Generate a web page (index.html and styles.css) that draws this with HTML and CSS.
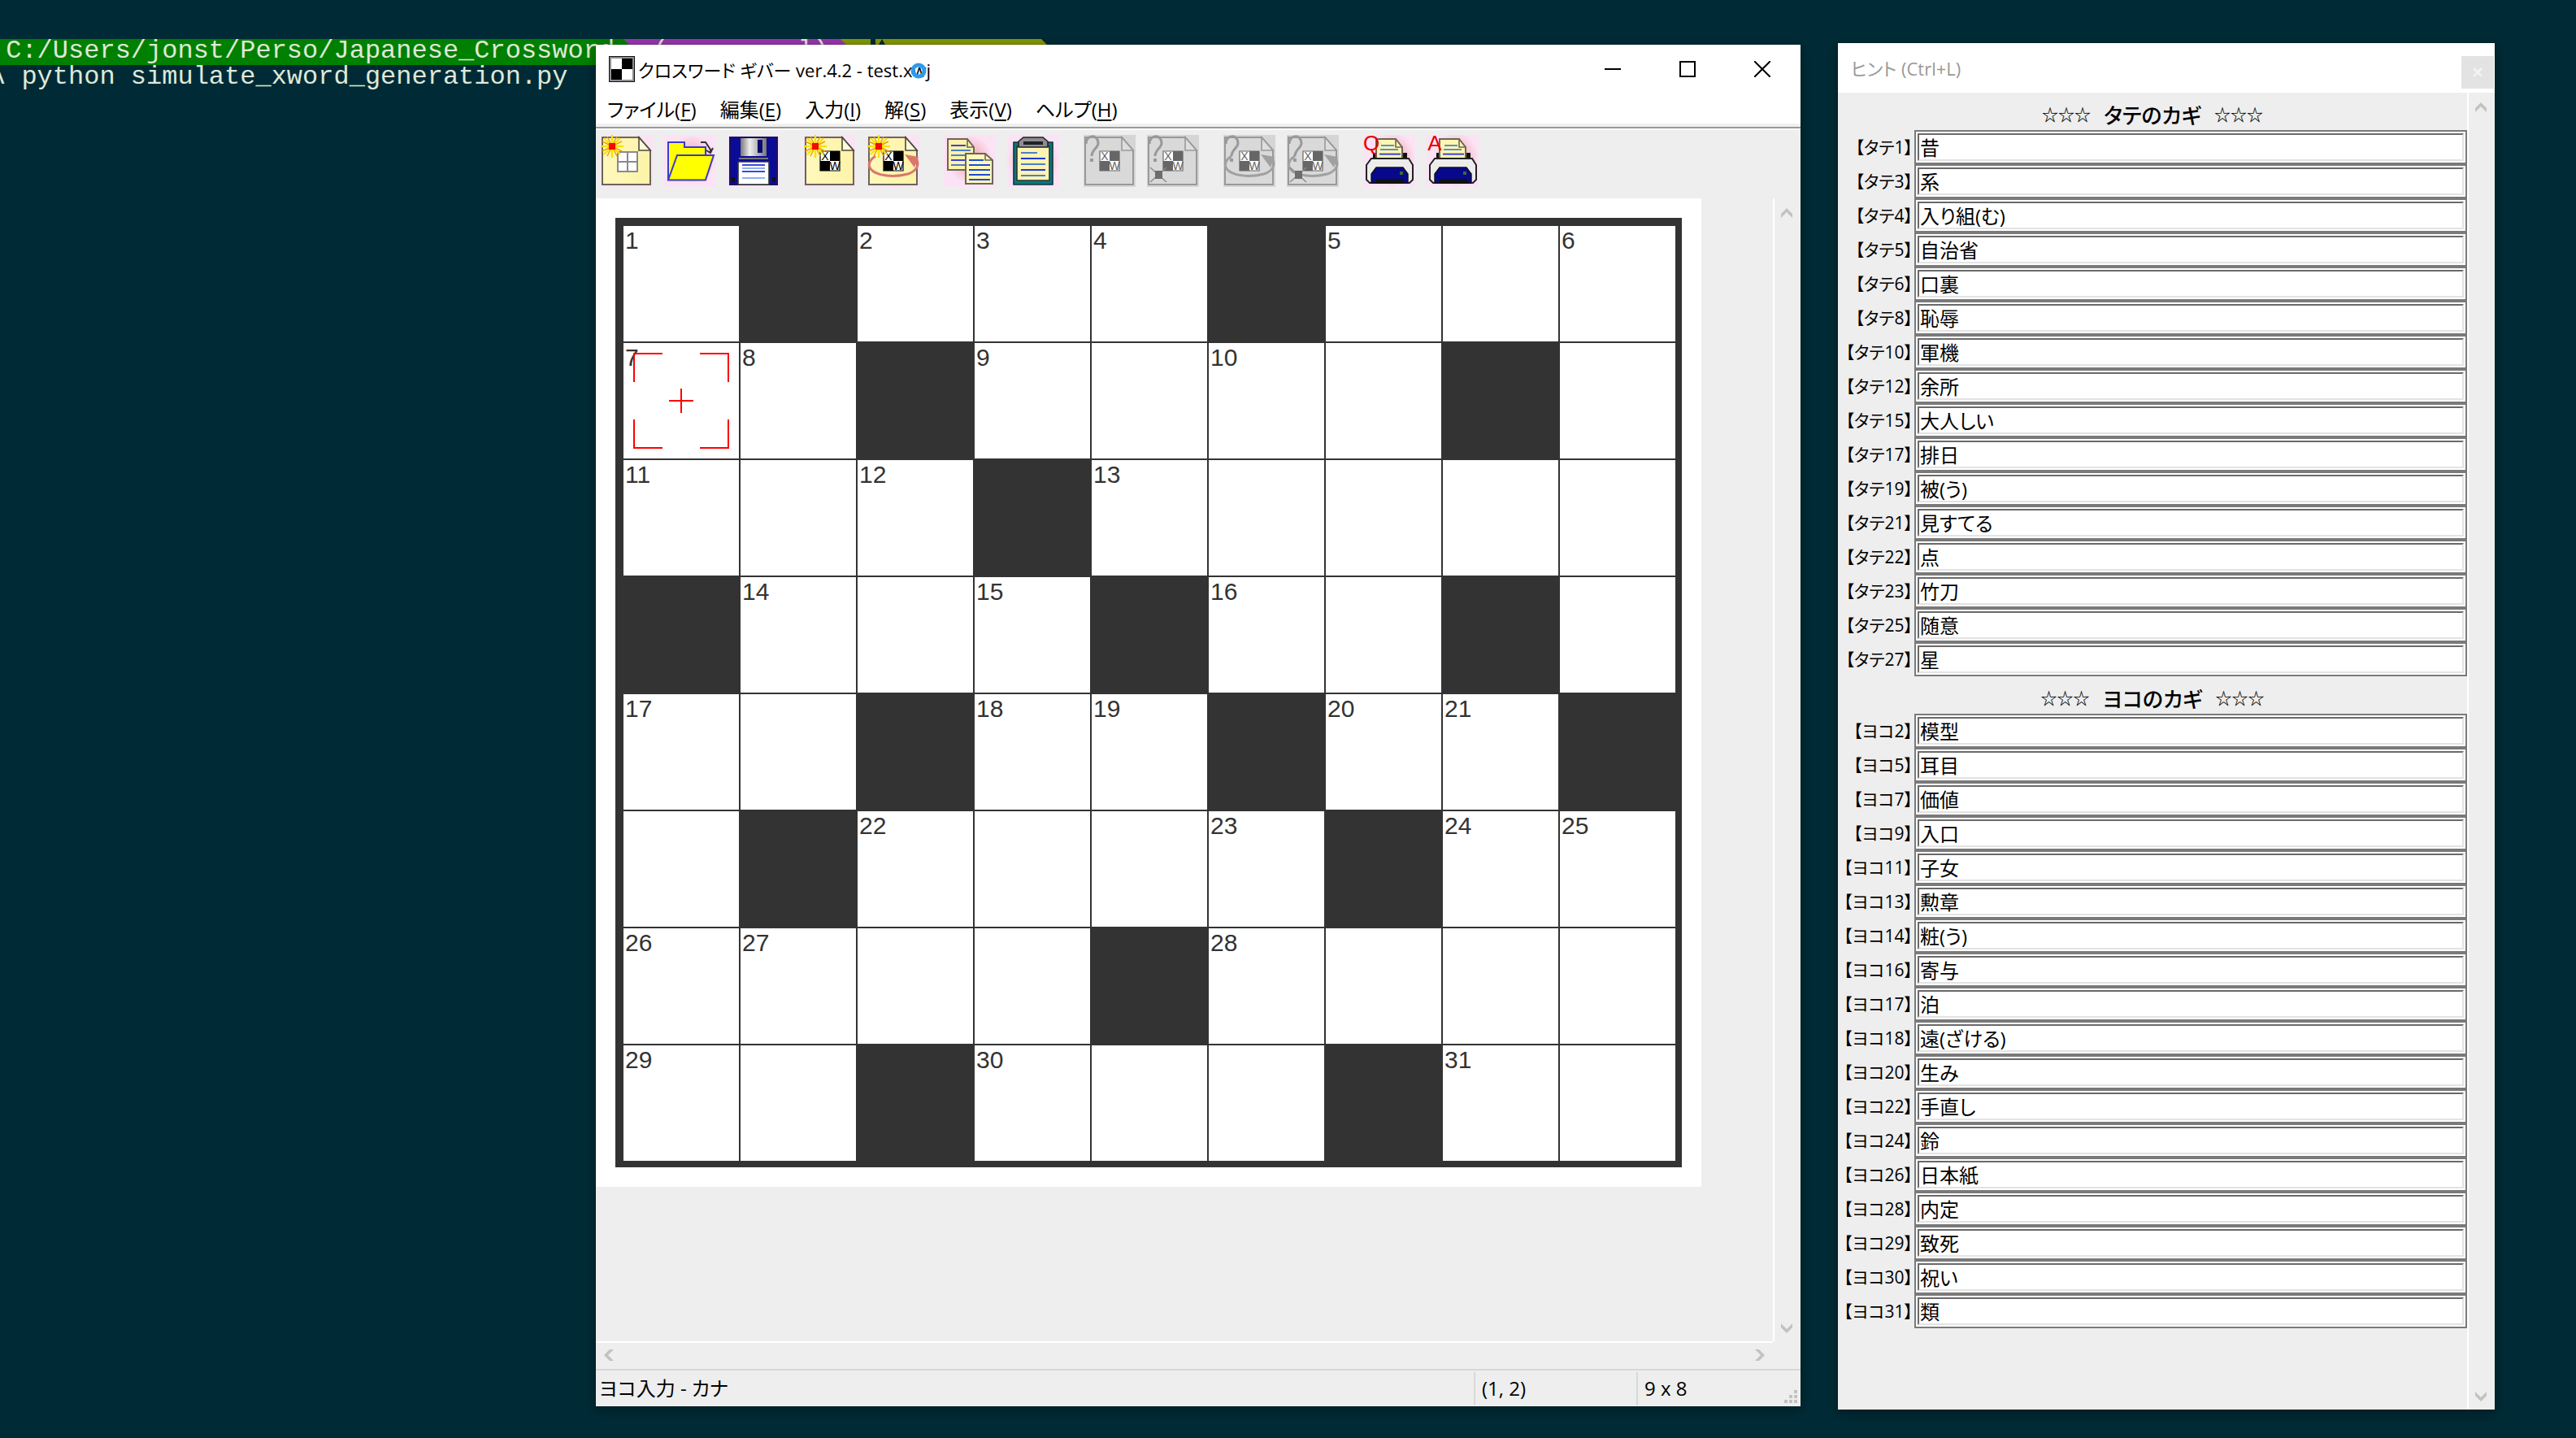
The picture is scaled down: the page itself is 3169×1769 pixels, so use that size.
FILE: index.html
```html
<!DOCTYPE html>
<html lang="ja">
<head>
<meta charset="utf-8">
<title>クロスワード ギバー ver.4.2 - test.xwj</title>
<link rel="stylesheet" href="styles.css">
</head>
<body>
<svg class="defs" aria-hidden="true">
  <defs>
    <radialGradient id="glow"><stop offset="0" stop-color="#e88a94"/><stop offset=".55" stop-color="#f6c3d0"/><stop offset="1" stop-color="#fbe3f5"/></radialGradient>
    <linearGradient id="steel"><stop offset="0" stop-color="#777"/><stop offset=".35" stop-color="#eee"/><stop offset="1" stop-color="#777"/></linearGradient>
    <linearGradient id="cream"><stop offset="0" stop-color="#fff8bc"/><stop offset="1" stop-color="#fdf3a8"/></linearGradient>
    <symbol id="page" viewBox="0 0 32 32"><path fill="#fbe3f5" d="M0 0h32v32H0z"/><path fill="url(#cream)" stroke="#6a6658" d="M1 1.5h22.5l7 8v21H1z"/><path fill="#fffbd8" stroke="#4d4a40" stroke-width=".8" d="M23.5 1.5v8h7z"/></symbol>
    <symbol id="gray-page" viewBox="0 0 32 32"><path fill="#d5d5d5" d="M0 0h32v32H0z"/><path fill="#d9d9d9" stroke="#999" d="M1 1.5h22.5l7 8v21H1z"/><path fill="#dedede" stroke="#999" stroke-width=".8" d="M23.5 1.5v8h7z"/></symbol>
    <symbol id="sun" viewBox="0 0 32 32"><path stroke="#f4e400" stroke-width="1.2" d="M7 0v14M0 7h14M2 2l10 10M12 2L2 12"/><path stroke="#f49a00" stroke-width=".7" d="M4 1l6 12M10 1L4 13M1 4l12 6M13 4L1 10"/><path fill="#f10c00" d="M5 5h4v4H5z"/></symbol>
    <symbol id="xw" viewBox="0 0 32 32"><path fill="#fff" d="M10 10h12v12H10z"/><path fill="currentColor" d="M16 10h6v6h-6zM10 16h6v6h-6z"/><path fill="none" stroke="currentColor" stroke-width=".6" d="M10 10h12v12H10z"/><text class="glyph" x="13" y="15.7" fill="currentColor">X</text><text class="glyph" x="19" y="21.7" fill="currentColor">W</text></symbol>
    <symbol id="orbit" viewBox="0 0 32 32"><path fill="none" stroke="currentColor" stroke-width="1.5" d="M5 13C-1 17 0 22 8 24.300q8 2 17-.3c6-2 7-6 5-10"/><path fill="currentColor" d="M23 12l8.500 1.500-2.500 6.500z"/></symbol>
    <symbol id="ask" viewBox="0 0 32 32"><path fill="none" stroke="#999" stroke-width="1.500" d="M1.500 5.500C1.500-.5 9-.5 9 5c0 3-4 4-4 8"/><path fill="#999" d="M4 14.500h2v2H4z"/></symbol>
    <symbol id="spot" viewBox="0 0 32 32"><path stroke="#8a8a8a" stroke-width=".7" d="M2 20l10 9M12 20L2 29"/><path fill="#6d6d6d" d="M5 22h4.500v5H5z"/></symbol>
    <symbol id="printer" viewBox="0 0 32 32"><path fill="#fbe3f5" d="M0 0h32v32H0z"/><ellipse cx="18" cy="15" rx="14" ry="17" fill="url(#glow)"/><path fill="#111" d="M6 11h21v4H6z"/><path fill="#fff6b0" stroke="#6a6658" d="M8 14.500V2.500h12l4 5v7z"/><path fill="none" stroke="#6a6658" stroke-width=".8" d="M20 2.500v5h4"/><path stroke="#5a8fd0" d="M11 6.500h8M10.500 9h11"/><path stroke="#3a43d8" d="M10 11.800h13"/><path fill="#ececec" stroke="#222" d="M5 14.500h23l2.500 4v9l-2 2H4l-2-2v-9z"/><path fill="#08088c" stroke="#111" stroke-width=".7" d="M5 29.500V24l3-4h16.500l3 4v5.500z"/><path fill="#111" d="M8 27h17v3H8z"/><path fill="#3b6a3b" d="M22.500 22.500h2v2h-2z"/></symbol>
    <symbol id="up" viewBox="0 0 14 12"><path fill="#c2c3bf" d="M7 0l7 7v5L7 5l-7 7V7z"/></symbol>
  </defs>
</svg>

<section class="terminal">
  <div class="prompt">
    <span class="seg path"> C:/Users/jonst/Perso/Japanese_Crossword</span>
    <span class="seg env"><span>(</span><span>l)</span></span>
    <span class="seg branch"></span>
    <span class="seg state"><svg viewBox="0 0 16 14"><path fill="#002b36" d="M8 0l8 14H0z"/></svg></span>
  </div>
  <div class="command">λ python simulate_xword_generation.py</div>
</section>

<main class="desktop">
  <section class="window editor">
    <header class="titlebar">
      <svg class="app-icon" viewBox="0 0 32 32"><path fill="#111" d="M0 0h32v32H0z"/><path fill="#8a8f94" d="M1 1h30v30H1z"/><path fill="#fff" d="M3 3h13v13H3zM16 16h13v13H16z"/><path fill="#000" d="M16 3h13v13H16zM3 16h13v13H3z"/></svg>
      <h1 class="title">クロスワード ギバー ver.4.2 - test.x<span class="busy">w<svg viewBox="0 0 20 20"><circle cx="10" cy="10" r="7" fill="none" stroke="#2f9ae8" stroke-width="5"/></svg></span>j</h1>
      <div class="controls">
        <button aria-label="最小化"><svg viewBox="0 0 20 20"><path d="M0 9h20v2H0z"/></svg></button>
        <button aria-label="最大化"><svg viewBox="0 0 20 20"><path fill="none" stroke="#000" stroke-width="2" d="M1 1h18v18H1z"/></svg></button>
        <button aria-label="閉じる"><svg viewBox="0 0 20 20"><path stroke="#000" stroke-width="2" d="M0 0l20 20M20 0L0 20"/></svg></button>
      </div>
    </header>
    <nav class="menubar">
      <button>ファイル(<u>F</u>)</button><button>編集(<u>E</u>)</button><button>入力(<u>I</u>)</button><button>解(<u>S</u>)</button><button>表示(<u>V</u>)</button><button>ヘルプ(<u>H</u>)</button>
    </nav>
    <div class="toolbar">
      <div class="tools">
        <button aria-label="新規"><svg viewBox="0 0 32 32"><use href="#page"/><path fill="#fff" stroke="#8a8a8a" d="M10.500 10.500h12v12h-12zM16.500 10.500v12M10.500 16.500h12"/><use href="#sun"/></svg></button>
        <button aria-label="開く"><svg viewBox="0 0 32 32"><path fill="#fbe3f5" d="M0 0h32v32H0z"/><ellipse cx="17" cy="15" rx="14" ry="15" fill="url(#glow)"/><path fill="#ff0" stroke="#3a3ad0" d="M2.500 27V4.500h10V7.500h13V14l-3 13z"/><path fill="#ff0" stroke="#3a3ad0" d="M8 12.500h22.500l-5 15.200H2.500z"/><path fill="none" stroke="#333" d="M22.500 4.500h3l3 4.500v2M26 9.500l2.500 1.500 1.500-3"/></svg></button>
        <button aria-label="保存"><svg viewBox="0 0 32 32"><path fill="#fbe3f5" d="M0 0h32v32H0z"/><path fill="#0b0b98" stroke="#14145a" d="M1.500 1.500h29v29h-29z"/><path fill="url(#steel)" d="M8 2h16v11H8z"/><path fill="#0b0b70" d="M18.500 3h3v8h-3z"/><path stroke="#777" d="M7 14.500h18"/><path fill="#fff" stroke="#333" stroke-width=".8" d="M6.500 16.500h19v14h-19z"/><path stroke="#3a4be0" d="M9 18.500h14M9 22.500h14"/><path stroke="#8fb0f0" d="M9 20.500h14M9 26.500h14"/><path fill="#111" d="M2.500 26h2v3h-2zM27.500 26h2v3h-2z"/></svg></button>
      </div>
      <div class="tools">
        <button aria-label="問題作成"><svg viewBox="0 0 32 32"><use href="#page"/><use href="#xw"/><use href="#sun"/></svg></button>
        <button aria-label="連続作成"><svg viewBox="0 0 32 32"><use href="#page"/><use href="#xw"/><use href="#orbit" class="coral"/><use href="#sun"/></svg></button>
      </div>
      <div class="tools">
        <button aria-label="コピー"><svg viewBox="0 0 32 32"><path fill="#fbe3f5" d="M0 0h32v32H0z"/><ellipse cx="16" cy="15" rx="14" ry="15" fill="url(#glow)"/><path fill="#fff2a8" stroke="#6a6658" d="M2.500 2.500h12l4 5v14h-16z"/><path fill="none" stroke="#6a6658" stroke-width=".8" d="M14.500 2.500v5h4"/><path stroke="#3a43d8" d="M4.500 6.500h9M4.500 15.500h11"/><path stroke="#4a80c8" d="M4.500 9.500h12M4.500 12.500h12M4.500 18.500h11"/><path fill="#fff8bc" stroke="#6a6658" d="M13.500 11.500h12l4.500 4v14.500h-16.500z"/><path fill="none" stroke="#6a6658" stroke-width=".8" d="M25.500 11.500v4h4.500"/><path stroke="#1e4bd0" d="M15.500 15.500h9M15.500 18.500h13M15.500 21.500h13M15.500 24.500h13M15.500 27.500h13"/></svg></button>
        <button aria-label="貼り付け"><svg viewBox="0 0 32 32"><path fill="#fbe3f5" d="M0 0h32v32H0z"/><ellipse cx="16" cy="16" rx="16" ry="17" fill="url(#glow)"/><path fill="#067a78" stroke="#134" stroke-width=".8" d="M4 4.500h24v26H4z"/><path fill="#fdf3b4" stroke="#333" stroke-width=".8" d="M6 7h20v21H6z"/><path fill="#8d8d95" stroke="#222" stroke-width=".8" d="M7 7.500V4l3-2.500h12L25 4v3.500z"/><path fill="#222" d="M10 4h12v2H10z"/><path stroke="#4a80c8" d="M8.500 11h10M8.500 18h15M8.500 25h15"/><path stroke="#1e3bd0" d="M8.500 14.500h15M8.500 21.500h15"/></svg></button>
      </div>
      <div class="tools off">
        <button aria-label="解答" disabled><svg viewBox="0 0 32 32"><use href="#gray-page"/><use href="#xw"/><use href="#ask"/></svg></button>
        <button aria-label="部分解答" disabled><svg viewBox="0 0 32 32"><use href="#gray-page"/><use href="#xw"/><use href="#ask"/><use href="#spot"/></svg></button>
      </div>
      <div class="tools off">
        <button aria-label="連続解答" disabled><svg viewBox="0 0 32 32"><use href="#gray-page"/><use href="#xw"/><use href="#orbit" class="ash"/><use href="#ask"/></svg></button>
        <button aria-label="連続部分解答" disabled><svg viewBox="0 0 32 32"><use href="#gray-page"/><use href="#xw"/><use href="#orbit" class="ash"/><use href="#ask"/><use href="#spot"/></svg></button>
      </div>
      <div class="tools">
        <button aria-label="問題を印刷"><svg viewBox="0 0 32 32"><use href="#printer"/><text class="letter" x="5" y="9.500">Q</text></svg></button>
        <button aria-label="解答を印刷"><svg viewBox="0 0 32 32"><use href="#printer"/><text class="letter" x="5" y="9.500">A</text></svg></button>
      </div>
    </div>
    <div class="workspace">
      <div class="canvas">
        <div class="sheet">
          <div class="board">
            <div>1</div><div class="b"></div><div>2</div><div>3</div><div>4</div><div class="b"></div><div>5</div><div></div><div>6</div>
            <div class="active">7<svg viewBox="0 0 142 142"><path fill="none" stroke="#f00" stroke-width="2" d="M13 48V13h35M94 13h35v35M129 94v35H94M48 129H13V94M56 71h30M71 56v30"/></svg></div><div>8</div><div class="b"></div><div>9</div><div></div><div>10</div><div></div><div class="b"></div><div></div>
            <div>11</div><div></div><div>12</div><div class="b"></div><div>13</div><div></div><div></div><div></div><div></div>
            <div class="b"></div><div>14</div><div></div><div>15</div><div class="b"></div><div>16</div><div></div><div class="b"></div><div></div>
            <div>17</div><div></div><div class="b"></div><div>18</div><div>19</div><div class="b"></div><div>20</div><div>21</div><div class="b"></div>
            <div></div><div class="b"></div><div>22</div><div></div><div></div><div>23</div><div class="b"></div><div>24</div><div>25</div>
            <div>26</div><div>27</div><div></div><div></div><div class="b"></div><div>28</div><div></div><div></div><div></div>
            <div>29</div><div></div><div class="b"></div><div>30</div><div></div><div></div><div class="b"></div><div>31</div><div></div>
          </div>
        </div>
      </div>
      <div class="vscroll"><svg class="arrow"><use href="#up"/></svg><svg class="arrow down"><use href="#up"/></svg></div>
      <div class="hscroll"><svg viewBox="0 0 12 14"><path fill="#c2c3bf" d="M0 7l7-7h5L5 7l7 7H7z"/></svg><svg viewBox="0 0 12 14"><path fill="#c2c3bf" d="M12 7L5 0H0l7 7-7 7h5z"/></svg></div>
    </div>
    <footer class="status">
      <span class="mode">ヨコ入力 - カナ</span><span class="cell">(1, 2)</span><span class="cell">9 x 8</span>
      <svg class="grip" viewBox="0 0 16 16"><path fill="#c2c3bf" d="M12 0h4v4h-4zM6 6h4v4H6zM12 6h4v4h-4zM0 12h4v4H0zM6 12h4v4H6zM12 12h4v4h-4z"/></svg>
    </footer>
  </section>

  <section class="window hints">
    <header class="hintbar">
      <h2 class="title">ヒント (Ctrl+L)</h2>
      <button aria-label="閉じる"><svg viewBox="0 0 12 10"><path stroke="#f4f4f4" stroke-width="2.500" d="M1 0l10 10M11 0L1 10"/></svg></button>
    </header>
    <div class="hintbody">
      <form class="clues">
        <h3><span>☆☆☆</span>タテのカギ<span>☆☆☆</span></h3>
        <div class="clue"><label for="t1">【タテ1】</label><div class="box"><input id="t1" value="昔"></div></div>
        <div class="clue"><label for="t3">【タテ3】</label><div class="box"><input id="t3" value="系"></div></div>
        <div class="clue"><label for="t4">【タテ4】</label><div class="box"><input id="t4" value="入り組(む)"></div></div>
        <div class="clue"><label for="t5">【タテ5】</label><div class="box"><input id="t5" value="自治省"></div></div>
        <div class="clue"><label for="t6">【タテ6】</label><div class="box"><input id="t6" value="口裏"></div></div>
        <div class="clue"><label for="t8">【タテ8】</label><div class="box"><input id="t8" value="恥辱"></div></div>
        <div class="clue"><label for="t10">【タテ10】</label><div class="box"><input id="t10" value="軍機"></div></div>
        <div class="clue"><label for="t12">【タテ12】</label><div class="box"><input id="t12" value="余所"></div></div>
        <div class="clue"><label for="t15">【タテ15】</label><div class="box"><input id="t15" value="大人しい"></div></div>
        <div class="clue"><label for="t17">【タテ17】</label><div class="box"><input id="t17" value="排日"></div></div>
        <div class="clue"><label for="t19">【タテ19】</label><div class="box"><input id="t19" value="被(う)"></div></div>
        <div class="clue"><label for="t21">【タテ21】</label><div class="box"><input id="t21" value="見すてる"></div></div>
        <div class="clue"><label for="t22">【タテ22】</label><div class="box"><input id="t22" value="点"></div></div>
        <div class="clue"><label for="t23">【タテ23】</label><div class="box"><input id="t23" value="竹刀"></div></div>
        <div class="clue"><label for="t25">【タテ25】</label><div class="box"><input id="t25" value="随意"></div></div>
        <div class="clue"><label for="t27">【タテ27】</label><div class="box"><input id="t27" value="星"></div></div>
        <h3><span>☆☆☆</span>ヨコのカギ<span>☆☆☆</span></h3>
        <div class="clue"><label for="y2">【ヨコ2】</label><div class="box"><input id="y2" value="模型"></div></div>
        <div class="clue"><label for="y5">【ヨコ5】</label><div class="box"><input id="y5" value="耳目"></div></div>
        <div class="clue"><label for="y7">【ヨコ7】</label><div class="box"><input id="y7" value="価値"></div></div>
        <div class="clue"><label for="y9">【ヨコ9】</label><div class="box"><input id="y9" value="入口"></div></div>
        <div class="clue"><label for="y11">【ヨコ11】</label><div class="box"><input id="y11" value="子女"></div></div>
        <div class="clue"><label for="y13">【ヨコ13】</label><div class="box"><input id="y13" value="勲章"></div></div>
        <div class="clue"><label for="y14">【ヨコ14】</label><div class="box"><input id="y14" value="粧(う)"></div></div>
        <div class="clue"><label for="y16">【ヨコ16】</label><div class="box"><input id="y16" value="寄与"></div></div>
        <div class="clue"><label for="y17">【ヨコ17】</label><div class="box"><input id="y17" value="泊"></div></div>
        <div class="clue"><label for="y18">【ヨコ18】</label><div class="box"><input id="y18" value="遠(ざける)"></div></div>
        <div class="clue"><label for="y20">【ヨコ20】</label><div class="box"><input id="y20" value="生み"></div></div>
        <div class="clue"><label for="y22">【ヨコ22】</label><div class="box"><input id="y22" value="手直し"></div></div>
        <div class="clue"><label for="y24">【ヨコ24】</label><div class="box"><input id="y24" value="鈴"></div></div>
        <div class="clue"><label for="y26">【ヨコ26】</label><div class="box"><input id="y26" value="日本紙"></div></div>
        <div class="clue"><label for="y28">【ヨコ28】</label><div class="box"><input id="y28" value="内定"></div></div>
        <div class="clue"><label for="y29">【ヨコ29】</label><div class="box"><input id="y29" value="致死"></div></div>
        <div class="clue"><label for="y30">【ヨコ30】</label><div class="box"><input id="y30" value="祝い"></div></div>
        <div class="clue"><label for="y31">【ヨコ31】</label><div class="box"><input id="y31" value="類"></div></div>
      </form>
      <div class="vscroll"><svg class="arrow"><use href="#up"/></svg><svg class="arrow down"><use href="#up"/></svg></div>
    </div>
  </section>
</main>
</body>
</html>
```
FILE: styles.css
```css
* { box-sizing: border-box; }

body {
  margin: 0;
  background: #002b36;
  color: #000;
  font: 24px/32px "Open Sans", "Noto Sans CJK JP", sans-serif;
  font-feature-settings: "palt";
}

button {
  padding: 0;
  border: 0;
  background: none;
  color: inherit;
  font: inherit;
  font-feature-settings: inherit;
}

h1, h2, h3 { margin: 0; font-weight: 400; }
svg { display: block; }
.defs { position: absolute; width: 0; height: 0; }

/* Console behind the windows */
.terminal {
  position: absolute;
  z-index: 0;
  top: 48px;
  left: -12px;
  width: 1320px;
  color: #dfe8d8;
  font: 32px/30px "Liberation Mono", monospace;
}
.prompt { display: flex; height: 32px; }
.command { white-space: pre; }
.seg {
  flex: none;
  height: 32px;
  margin-right: -16px;
  white-space: pre;
  clip-path: polygon(0 0, calc(100% - 16px) 0, 100% 50%, calc(100% - 16px) 100%, 0 100%);
}
.path { position: relative; z-index: 3; width: 795px; background: #008000; }
.env {
  position: relative;
  z-index: 2;
  display: flex;
  justify-content: space-between;
  width: 283px;
  padding: 0 30px 0 36px;
  background: #9a35b0;
}
.branch { width: 37px; margin: 0 6px 0 0; background: #859900; clip-path: none; }
.state { width: 220px; background: #859900; }
.state svg { width: 16px; height: 14px; }

.desktop {
  position: relative;
  z-index: 1;
  display: grid;
  grid-template-columns: 1482fr 808fr;
  gap: 46px;
  min-width: 2500px;
  min-height: 100vh;
  padding: 53px 100px 35px 733px;
}
.window {
  display: flex;
  flex-direction: column;
  background: #eee;
  box-shadow: 0 4px 16px rgba(0, 0, 0, .35), 0 0 1px #111;
}
.editor { margin: 2px 0 4px; }

.titlebar {
  display: flex;
  align-items: center;
  height: 60px;
  padding-left: 16px;
  background: #fff;
}
.app-icon { width: 32px; height: 32px; }
.title { font-size: 22px; }
.titlebar .title { flex: 1; padding: 2px 0 0 4px; }
.busy { position: relative; }
.busy svg { position: absolute; left: -2px; top: 6px; width: 20px; height: 20px; }
.controls { display: flex; padding-right: 1px; }
.controls button { display: grid; place-items: center; width: 92px; height: 60px; }
.controls svg { width: 20px; height: 20px; }

.menubar {
  display: flex;
  gap: 29px;
  height: 37px;
  padding: 2px 14px 0;
  background: #fff;
}
.menubar u { text-underline-offset: 3px; }

.toolbar {
  display: flex;
  gap: 30px;
  height: 92px;
  padding: 10px 6px 0;
  border-top: 4px solid #f0f0f0;
  background: linear-gradient(#999 2px, #fff 2px 4px, #eee 4px);
}
.tools { display: flex; gap: 14px; }
.tools button, .tools svg { width: 64px; height: 64px; }
.off { color: #666; }
.coral { color: #d9786a; }
.ash { color: #a0a0a0; }
.glyph { font: 7px "Liberation Sans", sans-serif; text-anchor: middle; }
.letter { font: 13px "Liberation Sans", sans-serif; text-anchor: middle; fill: #e80000; }

.workspace {
  display: grid;
  grid-template: 1fr 34px / 1fr 34px;
  flex: 1;
}
.canvas { min-width: 0; }
.sheet { display: inline-block; vertical-align: top; padding: 24px; background: #fff; }
.board {
  display: grid;
  grid-template-columns: repeat(9, 142px);
  grid-auto-rows: 142px;
  gap: 2px;
  padding: 10px 8px 8px 10px;
  background: #333;
  color: #333;
  font: 30px/34px "Liberation Sans", sans-serif;
}
.board div { padding: 1px 2px; background: #fff; }
.board .b { background: #333; }
.board .active { position: relative; }
.active svg { position: absolute; inset: 0; }

.vscroll {
  display: flex;
  flex-direction: column;
  justify-content: space-between;
  width: 34px;
  padding: 12px 8px 10px;
  border-left: 2px solid #fff;
}
.arrow { width: 14px; height: 12px; }
.down { transform: rotate(180deg); }
.hscroll {
  display: flex;
  justify-content: space-between;
  padding: 8px 10px;
  border-top: 2px solid #fff;
}
.hscroll svg { width: 12px; height: 14px; }

.status {
  position: relative;
  display: flex;
  height: 46px;
  padding: 2px 2px 2px 0;
  border-top: 2px solid #d7d7d7;
  line-height: 40px;
}
.mode { flex: 1; padding-left: 4px; }
.cell { width: 200px; padding-left: 8px; border-left: 2px solid #d7d7d7; }
.grip { position: absolute; right: 4px; bottom: 4px; width: 16px; height: 16px; }

.hintbar {
  display: flex;
  justify-content: space-between;
  height: 61px;
  padding: 16px 1px 0 16px;
  background: #fff;
  color: #999;
}
.hintbar .title { line-height: 30px; }
.hintbar button { display: grid; place-items: center; width: 40px; height: 40px; background: #e3e3e3; }
.hintbar button svg { width: 12px; height: 10px; }
.hintbody { display: flex; flex: 1; }
.clues { flex: 1; }
.clues h3 {
  display: flex;
  justify-content: center;
  gap: 16px;
  height: 46px;
  padding-top: 12px;
  font-size: 26px;
  font-weight: 500;
}
.clues h3 span { font-size: 20px; }
.clue { display: flex; height: 42px; }
.clue label {
  width: 94px;
  padding-right: 2px;
  font-size: 21px;
  line-height: 42px;
  text-align: right;
  white-space: nowrap;
}
.box { flex: 1; padding: 2px; border: 2px solid #7a7a7a; background: #fff; }
.box input {
  display: block;
  width: 100%;
  height: 34px;
  padding: 0 1px 2px;
  border: 2px solid;
  border-color: #696969 #e3e3e3 #e3e3e3 #696969;
  border-radius: 0;
  outline: 0;
  background: #fff;
  color: #000;
  font: inherit;
  line-height: 28px;
  font-feature-settings: inherit;
}
```
